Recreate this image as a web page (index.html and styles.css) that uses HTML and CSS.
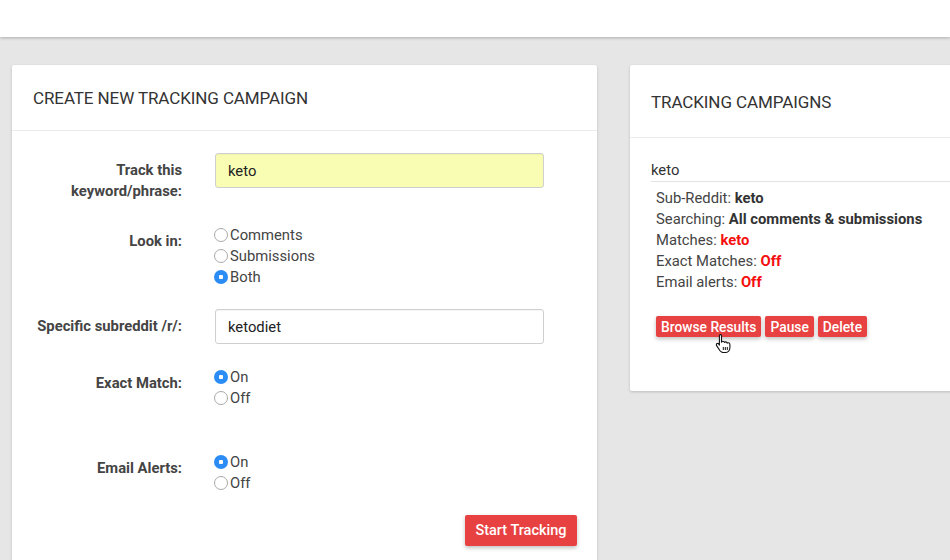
FILE: index.html
```html
<!DOCTYPE html>
<html>
<head>
<meta charset="utf-8">
<title>Tracking Campaigns</title>
<link rel="stylesheet" href="styles.css">
</head>
<body>
<header class="topbar"></header>
<main class="layout">
  <section class="card card-create">
    <div class="card-head"><h2>Create new tracking campaign</h2></div>
    <form class="card-body form">
      <div class="row">
        <label class="row-label" for="kw">Track this keyword/phrase:</label>
        <div class="row-field"><input id="kw" class="text-input hilite" type="text" value="keto"></div>
      </div>
      <div class="row">
        <span class="row-label">Look in:</span>
        <div class="row-field radios">
          <label class="radio"><input type="radio" name="look">Comments</label>
          <label class="radio"><input type="radio" name="look">Submissions</label>
          <label class="radio"><input type="radio" name="look" checked>Both</label>
        </div>
      </div>
      <div class="row">
        <label class="row-label" for="sub">Specific subreddit /r/:</label>
        <div class="row-field"><input id="sub" class="text-input" type="text" value="ketodiet"></div>
      </div>
      <div class="row row-spaced">
        <span class="row-label">Exact Match:</span>
        <div class="row-field radios">
          <label class="radio"><input type="radio" name="exact" checked>On</label>
          <label class="radio"><input type="radio" name="exact">Off</label>
        </div>
      </div>
      <div class="row">
        <span class="row-label">Email Alerts:</span>
        <div class="row-field radios">
          <label class="radio"><input type="radio" name="email" checked>On</label>
          <label class="radio"><input type="radio" name="email">Off</label>
        </div>
      </div>
      <div class="actions">
        <button type="button" class="btn btn-lg">Start Tracking</button>
      </div>
    </form>
  </section>

  <section class="card card-list">
    <div class="card-head tall"><h2>Tracking campaigns</h2></div>
    <div class="card-body list">
      <div class="campaign-name">keto</div>
      <ul class="details">
        <li>Sub-Reddit: <b>keto</b></li>
        <li>Searching: <b>All comments &amp; submissions</b></li>
        <li>Matches: <b class="red">keto</b></li>
        <li>Exact Matches: <b class="red">Off</b></li>
        <li>Email alerts: <b class="red">Off</b></li>
      </ul>
      <div class="btn-row">
        <button type="button" class="btn btn-sm">Browse Results</button>
        <button type="button" class="btn btn-sm">Pause</button>
        <button type="button" class="btn btn-sm">Delete</button>
        <svg class="pointer" width="18" height="20" viewBox="0 0 18 20">
          <path d="M5 1.5c.9 0 1.5.6 1.5 1.5v6.2c.3-.6.8-.9 1.4-.9.8 0 1.4.5 1.5 1.2.3-.4.8-.6 1.3-.6.8 0 1.4.5 1.5 1.3.3-.3.7-.4 1.1-.4.9 0 1.6.7 1.6 1.6v3.4c0 2.6-1.9 4.7-4.6 4.7H8.2c-1.4 0-2.4-.6-3.2-1.7L1.6 12.6c-.5-.7-.3-1.6.4-2 .6-.4 1.4-.2 1.8.3l-.3.1.9 1.1V3c0-.9.6-1.5 1.5-1.5z" fill="#fff" stroke="#111" stroke-width="1.1" stroke-linejoin="round"/>
          <path d="M8.3 14v3M10.3 14v3M12.3 14v3" stroke="#111" stroke-width="1"/>
        </svg>
      </div>
    </div>
  </section>
</main>
</body>
</html>
```
FILE: styles.css
```css
* { box-sizing: border-box; }

html, body {
  margin: 0;
  height: 100%;
}

body {
  background: #e6e6e6;
  font-family: Roboto, "Liberation Sans", Arial, sans-serif;
  color: #333;
  overflow: hidden;
}

.topbar {
  height: 37px;
  background: #fff;
  box-shadow: 0 1px 3px rgba(0, 0, 0, 0.25);
  position: relative;
  z-index: 1;
}

.layout {
  display: flex;
  align-items: flex-start;
  gap: 33px;
  padding: 28px 0 0 12px;
}

.card {
  background: #fff;
  box-shadow: 0 1px 3px rgba(0, 0, 0, 0.18);
  border-radius: 2px;
  flex: none;
}

.card-create { width: 585px; height: 520px; }
.card-list { width: 340px; }

.card-head {
  height: 66px;
  display: flex;
  align-items: center;
  padding: 0 21px;
  border-bottom: 1px solid #ececec;
}
.card-head.tall {
  height: 73px;
  padding-top: 2px;
}

.card-head h2 {
  margin: 0;
  font-size: 17px;
  font-weight: 400;
  text-transform: uppercase;
  color: #333;
  letter-spacing: -0.1px;
}

/* campaign form */
.form {
  padding: 22px 20px 0 0;
}

.row {
  display: grid;
  grid-template-columns: 170px 329px;
  column-gap: 33px;
  margin-bottom: 22px;
}
.row-spaced { margin-bottom: 43px; }

.row-label {
  text-align: right;
  font-weight: 700;
  font-size: 14.8px;
  line-height: 21px;
  padding-top: 7px;
  color: #444;
}

.text-input {
  width: 100%;
  height: 35px;
  border: 1px solid #cfcfcf;
  border-radius: 3px;
  padding: 0 12px;
  font: 400 14.8px Roboto, "Liberation Sans", Arial, sans-serif;
  color: #222;
  background: #fff;
  box-shadow: inset 0 1px 1px rgba(0, 0, 0, 0.04);
  outline: none;
}
.text-input.hilite { background: #f9fdb4; }

.radios {
  display: flex;
  flex-direction: column;
  margin-left: -1px;
}

.radio {
  display: flex;
  align-items: center;
  height: 21px;
  font-size: 14.8px;
  color: #444;
}

.radio input {
  appearance: none;
  -webkit-appearance: none;
  width: 14px;
  height: 14px;
  margin: 1px 2px 0 0;
  border: 1px solid #a9a9a9;
  border-radius: 50%;
  background: #fff;
  flex: none;
}
.radio input:checked {
  border: none;
  background: radial-gradient(circle, #fff 0 2px, #2a8cf4 2.5px);
}

.actions {
  display: flex;
  justify-content: flex-end;
}

.btn {
  background: #e84141;
  color: #fff;
  border: none;
  border-radius: 2px;
  font-family: Roboto, "Liberation Sans", Arial, sans-serif;
  box-shadow: 0 2px 4px rgba(0, 0, 0, 0.25);
  cursor: pointer;
}
.btn-lg {
  width: 112px;
  height: 31px;
  font-size: 14.5px;
  font-weight: 500;
}
.btn-sm {
  height: 21px;
  padding: 0 5px;
  font-size: 13.8px;
  font-weight: 500;
}

/* campaign list */
.list {
  padding: 22px 0 54px 21px;
}

.campaign-name {
  font-size: 14.8px;
  line-height: 21px;
  border-bottom: 1px solid #e3e3e3;
  margin-right: -20px;
}

.details {
  list-style: none;
  margin: 6px 0 0;
  padding: 0 0 0 5px;
  font-size: 14.8px;
  line-height: 21px;
  color: #444;
}
.details b { color: #333; }
.details b.red { color: #f50f0f; }

.btn-row {
  position: relative;
  display: flex;
  gap: 4px;
  margin: 23px 0 0 5px;
}

.pointer {
  position: absolute;
  left: 59px;
  top: 17px;
}
```
